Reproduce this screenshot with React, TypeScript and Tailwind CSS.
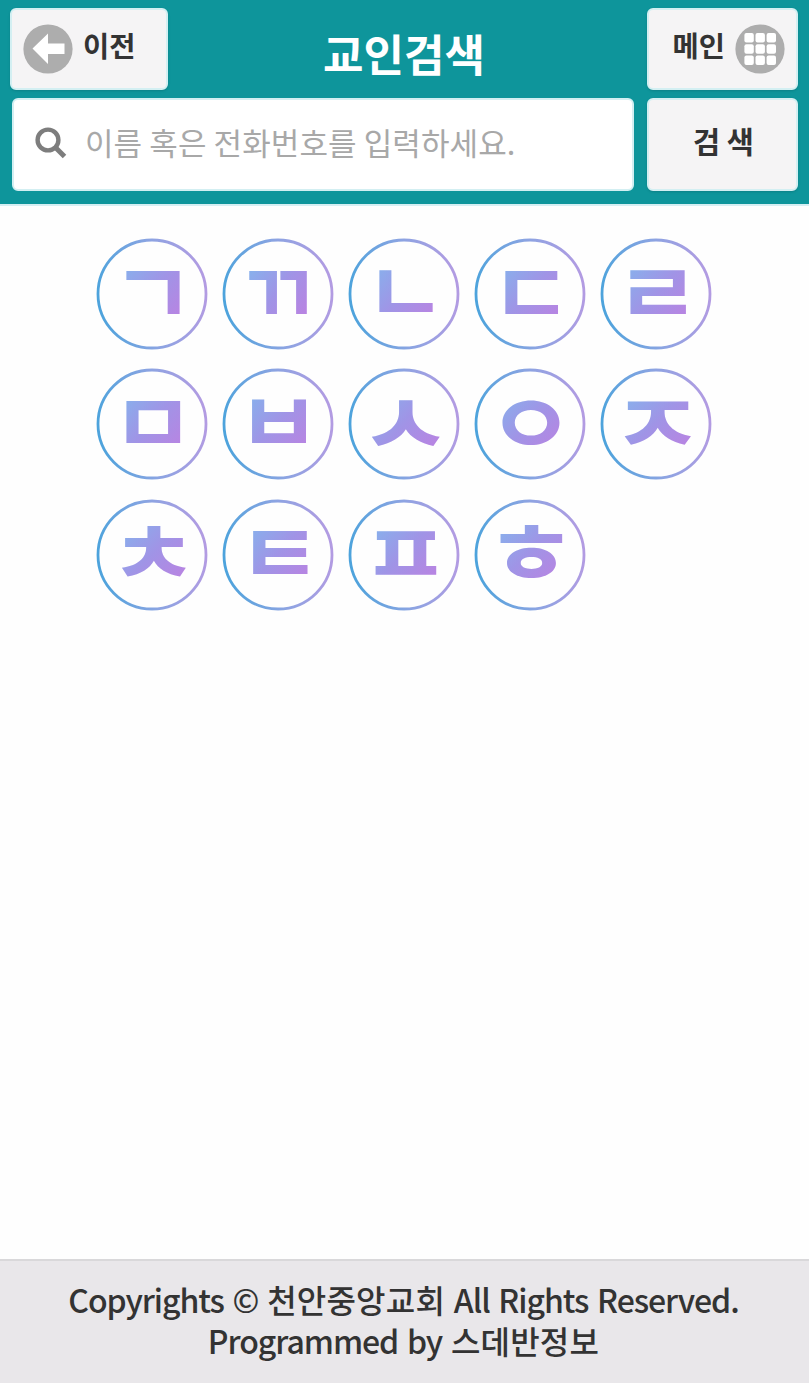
import { useState } from 'react'

// cx, cy: middle of the glyph inside the ring, sx, sy: stretch
const initials = [
  { letter: 'ㄱ', cx: 57, cy: 54.2, sx: 1.26, sy: 1.19 },
  { letter: 'ㄲ', cx: 56, cy: 54.5, sx: 1.13, sy: 1.19 },
  { letter: 'ㄴ', cx: 57.5, cy: 54, sx: 1.24, sy: 1.2 },
  { letter: 'ㄷ', cx: 57.5, cy: 54.5, sx: 1.25, sy: 1.18 },
  { letter: 'ㄹ', cx: 58, cy: 54.5, sx: 1.28, sy: 1.18 },
  { letter: 'ㅁ', cx: 57, cy: 54.5, sx: 1.27, sy: 1.19 },
  { letter: 'ㅂ', cx: 57, cy: 54, sx: 1.28, sy: 1.18 },
  { letter: 'ㅅ', cx: 57.5, cy: 54.5, sx: 1.4, sy: 1.2 },
  { letter: 'ㅇ', cx: 57, cy: 54.5, sx: 1.34, sy: 1.17 },
  { letter: 'ㅈ', cx: 57.5, cy: 54.5, sx: 1.42, sy: 1.14 },
  { letter: 'ㅊ', cx: 58, cy: 54, sx: 1.34, sy: 1.17 },
  { letter: 'ㅌ', cx: 58, cy: 54, sx: 1.27, sy: 1.18 },
  { letter: 'ㅍ', cx: 57.5, cy: 54, sx: 1.34, sy: 1.16 },
  { letter: 'ㅎ', cx: 57, cy: 53.5, sx: 1.4, sy: 1.15 }
]

const BackIcon = () => (
  <svg className="size-[50px] shrink-0" viewBox="0 0 50 50">
    <circle cx="25" cy="25" r="24.6" fill="#adadad" />
    <path d="M9.5 24.5 25 9.500v10h16.500v10.500H25V40z" fill="#fff" />
  </svg>
)

const GridIcon = () => (
  <svg className="size-[50px] shrink-0" viewBox="0 0 50 50">
    <circle cx="25" cy="25" r="24.6" fill="#adadad" />
    {[9, 20.3, 31.6].map((y) =>
      [9.4, 20.5, 31.6].map((x) => (
        <rect key={`${x}-${y}`} x={x} y={y} width="9.400" height="9.400" rx="2" fill="#fff" />
      ))
    )}
  </svg>
)

const SearchIcon = () => (
  <svg className="size-8 shrink-0 -mt-1" viewBox="0 0 32 32" fill="none" stroke="#7d7d7d">
    <circle cx="13" cy="13" r="10.400" strokeWidth="4.400" />
    <path d="m20.500 20.500 9 9" strokeWidth="5" />
  </svg>
)

const Gradients = () => (
  <svg className="absolute size-0">
    <defs>
      <linearGradient id="ring" x1="0" y1="0.500" x2="1" y2="0.400">
        <stop offset="0" stopColor="#4da3dc" />
        <stop offset="0.500" stopColor="#8aa4e2" />
        <stop offset="1" stopColor="#b39be2" />
      </linearGradient>
      <linearGradient id="letter" gradientUnits="userSpaceOnUse" x1="-25" y1="-46" x2="22" y2="-8">
        <stop offset="0" stopColor="#88b0ec" />
        <stop offset="0.500" stopColor="#a094e6" />
        <stop offset="1" stopColor="#b884e2" />
      </linearGradient>
    </defs>
  </svg>
)

const InitialButton = ({ letter, cx, cy, sx, sy }) => (
  <button type="button" className="size-28">
    <svg className="size-28 overflow-visible" viewBox="0 0 112 112">
      <circle cx="56" cy="56" r="54" fill="none" stroke="url(#ring)" strokeWidth="2.800" />
      <g transform={`translate(${cx} ${cy + 27.5 * sy}) scale(${sx} ${sy})`}>
        <text textAnchor="middle" fill="url(#letter)" fontSize="72" fontWeight="700">
          {letter}
        </text>
      </g>
    </svg>
  </button>
)

const App = () => {
  const [keyword, setKeyword] = useState('')

  const handleChange = (event) => {
    setKeyword(event.target.value)
  }

  return (
    <div className="flex flex-col min-h-[1383px] bg-[#fefefe] text-[#333] font-['Noto_Sans_CJK_KR',sans-serif]">
      <Gradients />
      <header className="h-[206px] bg-[#0e959b] border-b-2 border-[#d5eef2] pt-2 pl-2.5 pr-[11px]">
        <div className="flex justify-between">
          <button
            type="button"
            className="flex items-center w-[158px] h-[82px] pl-[11px] gap-2.5 rounded-md bg-[#f5f4f5] border-2 border-[#d3eff2] shadow-sm text-[28.5px] font-bold leading-none"
          >
            <BackIcon />
            <span className="-mt-2">이전</span>
          </button>
          <h1 className="pr-[7px] text-[44px] leading-[90px] -mb-0.5 font-bold text-white">
            교인검색
          </h1>
          <button
            type="button"
            className="flex items-center justify-end w-[151px] h-[82px] pr-[11px] gap-2.5 rounded-md bg-[#f5f4f5] border-2 border-[#d3eff2] shadow-sm text-[28.5px] font-bold leading-none"
          >
            <span className="-mt-2">메인</span>
            <GridIcon />
          </button>
        </div>
        <form className="flex justify-between pl-0.5 mt-0.5" onSubmit={(e) => e.preventDefault()}>
          <label className="flex items-center w-[622px] h-[93px] pl-[21px] gap-[18px] rounded-md bg-white border-2 border-[#d3eff2]">
            <SearchIcon />
            <input
              type="text"
              name="keyword"
              value={keyword}
              className="w-[500px] pb-1 text-[31px] tracking-[0.1px] outline-none placeholder:text-[#a8a8a8]"
              placeholder="이름 혹은 전화번호를 입력하세요."
              onChange={handleChange}
            />
          </label>
          <button
            type="submit"
            className="w-[151px] h-[93px] pb-2 pl-0.5 rounded-md bg-[#f5f4f5] border-2 border-[#d3eff2] shadow-sm text-[29.5px] font-bold"
          >
            검 색
          </button>
        </form>
      </header>
      <main className="grow pt-[31.5px] pl-24">
        <div className="grid grid-cols-[repeat(5,112px)] gap-x-3.5 gap-y-[18.5px]">
          {initials.map((item) => (
            <InitialButton key={item.letter} {...item} />
          ))}
        </div>
      </main>
      <footer className="h-[124px] pt-[18px] pr-0.5 bg-[#e9e7ea] border-t-2 border-[#d9d8da] text-center text-[32px] leading-[41px] font-medium tracking-[-1.05px] [word-spacing:2.600px]">
        <p>
          Copyrights © <span className="tracking-[0.2px]">천안중앙교회</span> All Rights Reserved.
        </p>
        <p>
          Programmed by <span className="tracking-[0.2px]">스데반정보</span>
        </p>
      </footer>
    </div>
  )
}

export default App
